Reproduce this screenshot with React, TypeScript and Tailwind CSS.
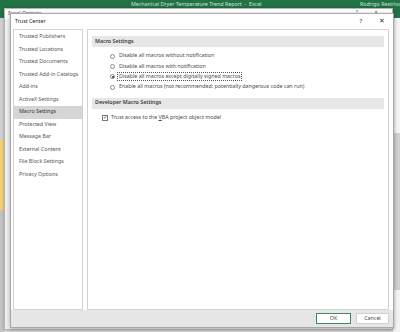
import React from "react";

const navItems = [
  "Trusted Publishers",
  "Trusted Locations",
  "Trusted Documents",
  "Trusted Add-in Catalogs",
  "Add-ins",
  "ActiveX Settings",
  "Macro Settings",
  "Protected View",
  "Message Bar",
  "External Content",
  "File Block Settings",
  "Privacy Options",
];

const macroOptions = [
  { label: "Disable all macros without notification", checked: false },
  { label: "Disable all macros with notification", checked: false },
  { label: "Disable all macros except digitally signed macros", checked: true },
  { label: "Enable all macros (not recommended; potentially dangerous code can run)", checked: false },
];

function Radio({ checked }: { checked: boolean }) {
  return (
    <span className="flex h-[5px] w-[5px] shrink-0 items-center justify-center rounded-full border border-[#8a8a8a] bg-white">
      {checked && <span className="h-[2px] w-[2px] rounded-full bg-[#2b2b2b]" />}
    </span>
  );
}

function SectionBar({ title }: { title: string }) {
  return (
    <div className="flex h-[11px] items-center bg-[#e6e6e6] pl-[3px] text-[5.3px] font-semibold text-[#3a3a3a]">
      {title}
    </div>
  );
}

export default function App() {
  return (
    <div className="relative h-[332px] w-[400px] overflow-hidden bg-[#dcdcdc] font-['Noto_Sans',sans-serif]">
      {/* Excel window behind */}
      <div className="flex h-full flex-col">
        <div className="flex h-[18px] shrink-0 bg-[#217346] pt-[1px] text-[5.3px] text-[#cfe6d7]">
          <span className="ml-[131px] whitespace-nowrap">
            Mechanical Dryer Temperature Trend Report&nbsp; -&nbsp; Excel
          </span>
          <span className="ml-auto w-[40px] overflow-hidden whitespace-nowrap">Rodrigo Restrivo</span>
        </div>
        <div className="flex flex-1">
          <div className="flex w-[4px] flex-col bg-[#d0d0d0]">
            <div className="h-[122px]" />
            <div className="h-[70px] bg-[#f3cf7a]" />
            <div className="flex-1 bg-[#c4c4c4]" />
          </div>
          <div className="flex-1" />
          <div className="flex w-[7px] flex-col bg-[#f4f4f4]">
            <div className="h-[115px]" />
            <div className="h-[157px] border-l border-[#9c9c9c] bg-[#cfcfcf]" />
            <div className="flex-1" />
          </div>
        </div>
      </div>

      {/* Excel Options dialog */}
      <div className="absolute left-[4px] top-[8px] h-[322px] w-[389px] border border-[#b4b4b4] bg-[#f0f0f0] shadow-[0_0_3px_rgba(0,0,0,0.25)]">
        <div className="flex h-[10px] items-start bg-white pl-[3px] pr-[14px] text-[5.3px] text-[#666]">
          <span className="mt-[1px] flex-1">Excel Options</span>
          <span className="mr-[16px]">?</span>
          <span>✕</span>
        </div>
      </div>

      {/* Trust Center dialog */}
      <div className="absolute left-[10px] top-[13px] flex h-[315px] w-[384px] flex-col border border-[#a8a8a8] bg-[#e8e8e8] shadow-[0_1px_4px_rgba(0,0,0,0.3)]">
        <div className="flex h-[15px] shrink-0 items-center bg-white pl-[4px] text-[5.3px] text-[#222]">
          <span className="flex-1">Trust Center</span>
          <span className="mr-[17px] text-[6px] text-[#333]">?</span>
          <span className="mr-[8px] text-[6.5px] leading-none text-[#333]">✕</span>
        </div>

        <div className="flex h-[281px] shrink-0 gap-[4px] bg-white pl-[2px] pr-[4px]">
          <div className="flex w-[70px] flex-col border border-[#d2d2d2] bg-white pt-[1px]">
            {navItems.map((item) => (
              <div
                key={item}
                className={`flex h-[12.5px] shrink-0 items-center whitespace-nowrap pl-[5px] text-[5.3px] ${
                  item === "Macro Settings" ? "bg-[#d5d5d5] text-[#333]" : "text-[#555]"
                }`}
              >
                {item}
              </div>
            ))}
          </div>

          <div className="flex flex-1 flex-col border border-[#d2d2d2] bg-white px-[4px] pt-[6px]">
            <SectionBar title="Macro Settings" />
            <div className="mt-[4px] flex flex-col pl-[18px]">
              {macroOptions.map((opt) => (
                <div key={opt.label} className="flex h-[10.4px] items-center gap-[2px] whitespace-nowrap text-[5.3px] text-[#4a4a4a]">
                  <Radio checked={opt.checked} />
                  <span className={opt.checked ? "border border-dotted border-[#555] px-[1px] leading-[7px]" : "px-[2px]"}>
                    {opt.label}
                  </span>
                </div>
              ))}
            </div>
            <div className="mt-[5px]">
              <SectionBar title="Developer Macro Settings" />
            </div>
            <div className="mt-[4px] flex h-[10px] items-center gap-[3px] pl-[10px] text-[5.3px] text-[#4a4a4a]">
              <span className="flex h-[6px] w-[6px] items-center justify-center border border-[#7a7a7a] bg-white text-[5px] leading-none text-[#333]">
                ✓
              </span>
              <span>
                Trust access to the <span className="underline">V</span>BA project object model
              </span>
            </div>
          </div>
        </div>

        <div className="flex flex-1 items-center justify-end gap-[5px] bg-[#e6e6e6] pr-[4px]">
          <button className="flex h-[11px] w-[35px] items-center justify-center border border-[#3c8a5c] bg-white text-[5.3px] text-[#444]">
            OK
          </button>
          <button className="flex h-[11px] w-[33px] items-center justify-center border border-[#d0d0d0] bg-white text-[5.3px] text-[#444]">
            Cancel
          </button>
        </div>
      </div>
    </div>
  );
}
